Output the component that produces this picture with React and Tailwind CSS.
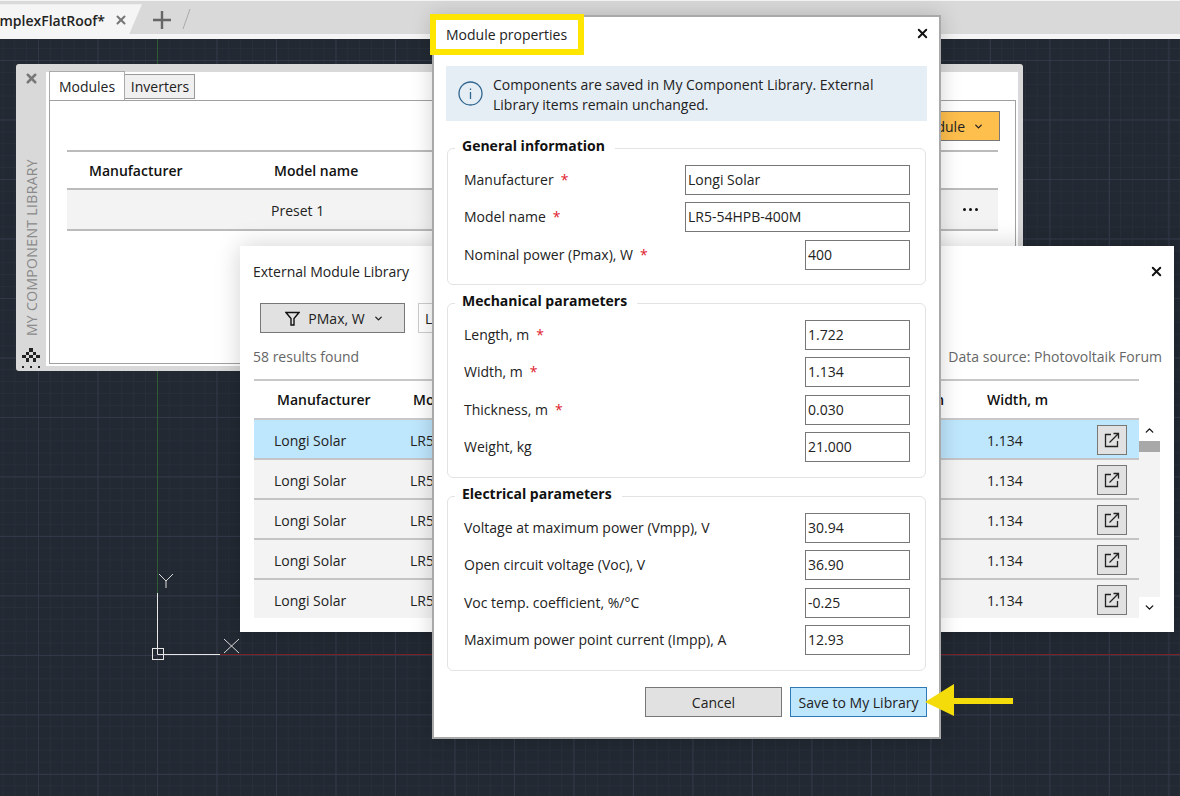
import React from "react";
import { ChevronDown, ChevronUp, X } from "lucide-react";

const generalRows = [
  { label: "Manufacturer", value: "Longi Solar", required: true, wide: true },
  { label: "Model name", value: "LR5-54HPB-400M", required: true, wide: true },
  { label: "Nominal power (Pmax), W", value: "400", required: true },
];
const mechanicalRows = [
  { label: "Length, m", value: "1.722", required: true },
  { label: "Width, m", value: "1.134", required: true },
  { label: "Thickness, m", value: "0.030", required: true },
  { label: "Weight, kg", value: "21.000" },
];
const electricalRows = [
  { label: "Voltage at maximum power (Vmpp), V", value: "30.94" },
  { label: "Open circuit voltage (Voc), V", value: "36.90" },
  { label: "Voc temp. coefficient, %/°C", value: "-0.25" },
  { label: "Maximum power point current (Impp), A", value: "12.93" },
];
const libraryRows = [true, false, false, false, false];

const ExternalIcon = () => (
  <svg width="16" height="16" viewBox="0 0 16 16" fill="none" stroke="#222" strokeWidth="1.3">
    <path d="M7 2.5H1.5v12h12V9" />
    <path d="M5.5 10.5 14 2M9.5 1.5h5v5" />
  </svg>
);

const FunnelIcon = () => (
  <svg width="15" height="15" viewBox="0 0 15 15" fill="none" stroke="#111" strokeWidth="1.4">
    <path d="M1 1.5h13L9 7.5v6.5H6V7.5z" />
  </svg>
);

const DitherIcon = () => (
  <svg width="22" height="22" viewBox="0 0 22 22" fill="#222">
    {[
      [9, 1, 4, 4], [6, 5, 3, 3], [13, 5, 3, 3], [2, 8, 4, 3], [9, 8, 4, 3], [16, 8, 4, 3],
      [6, 11, 3, 4], [13, 11, 3, 4], [2, 19, 2, 2], [10, 19, 2, 2], [18, 19, 2, 2],
    ].map(([x, y, w, h], i) => (
      <rect key={i} x={x} y={y} width={w} height={h} />
    ))}
  </svg>
);

const PropertyGroup = ({ title, rows, className }) => (
  <fieldset className={`mx-px rounded-md border border-[#e3e3e3] pl-4 pr-[15px] pb-[14.5px] ${className}`}>
    <legend className="ml-[-9px] h-6 pl-[7px] pr-[10px] text-[14px] leading-5 font-bold text-[#111]">{title}</legend>
    <div className="flex flex-col gap-[7.5px] pt-[4.5px]">
      {rows.map((row) => (
        <div key={row.label} className="flex h-[30px] items-center justify-between">
          <span className="pb-px text-[14px] text-[#222]">
            {row.label}
            {row.required && <span className="ml-[7px] text-[#e0202c]">*</span>}
          </span>
          <div
            className={`flex h-[30px] items-center border border-[#777] px-[2px] pb-px text-[14px] text-[#222] ${
              row.wide ? "w-[225px]" : "w-[105px]"
            }`}
          >
            {row.value}
          </div>
        </div>
      ))}
    </div>
  </fieldset>
);

const ComponentLibrary = () => (
  <div className="absolute left-4 top-16 flex h-[307px] w-[1007px] rounded-[3px] bg-[#d9d9d9]">
    <div className="flex w-[30px] flex-col items-center pt-[7px] pb-[2px]">
      <X size={15} strokeWidth={4} className="text-[#777]" />
      <div className="flex flex-1 items-end justify-center pb-[11px]">
        <span className="rotate-180 text-[14px] tracking-[0.35px] whitespace-nowrap text-[#8a8a8a] [writing-mode:vertical-rl]">
          MY COMPONENT LIBRARY
        </span>
      </div>
      <DitherIcon />
    </div>
    <div className="mt-2 mr-[5px] mb-[5px] flex flex-1 flex-col bg-white pl-[3px] pr-[2px] pb-[2px]">
      <div className="relative z-10 flex h-7 items-end">
        <div className="flex h-[29px] w-[76px] items-center justify-center border border-b-0 border-[#aaa] bg-white text-[14px] text-[#222]">
          Modules
        </div>
        <div className="mb-px flex h-[25px] w-[70px] items-center justify-center border border-l-0 border-[#999] bg-[#f0f0f0] pl-px text-[14px] text-[#222]">
          Inverters
        </div>
      </div>
      <div className="flex flex-1 flex-col border border-[#a0a0a0] pt-[10px] pl-[17px] pr-[15px]">
        <div className="flex justify-end">
          <div className="flex h-[30px] w-[170px] items-center justify-end gap-2 border border-[#777] bg-[#ffbf4d] pr-[15px] text-[14px] text-[#222]">
            Add module
            <ChevronDown size={11} strokeWidth={3} />
          </div>
        </div>
        <div className="mt-[9px] mr-[2px] border-t-2 border-[#bbb]">
          <div className="flex h-[36px] items-center text-[14px] font-semibold text-[#111]">
            <span className="w-[207px] pl-[22px]">Manufacturer</span>
            <span>Model name</span>
          </div>
          <div className="flex h-[43px] items-center border-t-2 border-b-2 border-[#bbb] bg-[#f3f3f3] text-[14px] text-[#222]">
            <span className="ml-[204px] pt-px">Preset 1</span>
            <span className="ml-auto flex gap-[3px] pr-5">
              <i className="size-[3px] rounded-full bg-[#111]" />
              <i className="size-[3px] rounded-full bg-[#111]" />
              <i className="size-[3px] rounded-full bg-[#111]" />
            </span>
          </div>
        </div>
      </div>
    </div>
  </div>
);

const ExternalLibrary = () => (
  <div className="absolute left-60 top-[246px] flex h-[386px] w-[934px] flex-col bg-white shadow-[0_0_24px_rgba(0,0,0,0.18)]">
    <div className="relative pt-4 pl-[13px] text-[14px] leading-5 text-[#222]">
      External Module Library
      <X size={15} strokeWidth={3} className="absolute right-[10px] top-[18px] text-[#111]" />
    </div>
    <div className="mt-[21px] flex gap-[13px] pl-5">
      <div className="flex h-[30px] w-[145px] items-center justify-center gap-2 border border-[#777] bg-[#e1e1e1] pl-1 text-[14px] text-[#222]">
        <FunnelIcon />
        PMax, W
        <ChevronDown size={11} strokeWidth={3} />
      </div>
      <div className="flex h-[30px] w-[200px] items-center border border-[#ccc] px-[6px] text-[14px] text-[#222]">
        Longi Solar
      </div>
    </div>
    <div className="mt-[14px] flex justify-between pl-[13px] pr-3 text-[14px] leading-5 text-[#666]">
      <span>58 results found</span>
      <span>Data source: Photovoltaik Forum</span>
    </div>
    <div className="mt-3 flex pl-[14px]">
      <div className="w-[885px]">
        <div className="flex h-[41px] items-center border-y-2 border-[#c8c8c8] pr-[42px] text-[14px] font-semibold text-[#111]">
          <span className="w-[159px] pl-[23px]">Manufacturer</span>
          <span className="flex flex-1 justify-between pr-[43px]">
            <span>Model name</span>
            <span>Length, m</span>
          </span>
          <span className="w-[110px]">Width, m</span>
        </div>
        {libraryRows.map((selected, i) => (
          <div
            key={i}
            className={`flex items-center pt-px pl-5 pr-3 text-[14px] text-[#222] ${
              selected ? "bg-[#bee6fd]" : "bg-[#f3f3f3]"
            } ${i < 4 ? "h-10 border-b-2 border-[#c4c4c4]" : "h-[38px]"}`}
          >
            <span className="w-[136px] pt-[2px]">Longi Solar</span>
            <span className="flex-1 pt-[2px]">LR5-54HPB-400M</span>
            <span className="w-[110px] pt-[2px]">1.134</span>
            <div className="flex size-[30px] items-center justify-center border border-[#777] bg-[#e1e1e1]">
              <ExternalIcon />
            </div>
          </div>
        ))}
      </div>
      <div className="mt-[41px] flex h-[198px] w-[21px] flex-col items-center">
        <div className="flex h-[21px] items-center text-[#111]">
          <ChevronUp size={13} strokeWidth={2.5} />
        </div>
        <div className="h-[11px] w-full bg-[#a8a8a8]" />
        <div className="w-full flex-1 bg-[#f3f3f3]" />
        <div className="flex h-[21px] items-center text-[#111]">
          <ChevronDown size={13} strokeWidth={2.5} />
        </div>
      </div>
    </div>
  </div>
);

const ModuleProperties = () => (
  <div className="absolute left-[432px] top-[15px] flex h-[724px] w-[509px] flex-col border-2 border-[#a9a9a9] bg-white px-3 shadow-[0_0_20px_rgba(0,0,0,0.18)]">
    <div className="flex h-[49px] items-start justify-between pt-[8px] text-[14px] leading-5 text-[#222]">
      <span>Module properties</span>
      <X size={15} strokeWidth={3} className="mt-[1px] -mr-[3px] text-[#111]" />
    </div>
    <div className="flex h-[55px] items-center gap-[10px] bg-[#e6eef5] pl-[12px] text-[14px] leading-5 text-[#222]">
      <svg width="25" height="25" viewBox="0 0 25 25" fill="none" stroke="#2f6690" strokeWidth="1.3" className="shrink-0">
        <circle cx="12.5" cy="12.5" r="11.5" />
        <path d="M12.5 11v7M12.5 7.5v1.6" />
      </svg>
      <span className="pt-[2px]">
        Components are saved in My Component Library. External
        <br />
        Library items remain unchanged.
      </span>
    </div>
    <PropertyGroup title="General information" rows={generalRows} className="mt-[15px]" />
    <PropertyGroup title="Mechanical parameters" rows={mechanicalRows} className="mt-[6px]" />
    <PropertyGroup title="Electrical parameters" rows={electricalRows} className="mt-[6.5px]" />
    <div className="mt-[16.5px] flex justify-end gap-2 text-[14px] text-[#222]">
      <div className="flex h-[30px] w-[137px] items-center justify-center border border-[#777] bg-[#e1e1e1]">Cancel</div>
      <div className="flex h-[30px] w-[137px] items-center justify-center border border-[#2f7ab5] bg-[#bee6fd]">
        Save to My Library
      </div>
    </div>
  </div>
);

const App = () => {
  return (
    <div className="relative h-[796px] w-[1180px] overflow-hidden bg-[#222932] font-['Open_Sans','Noto_Sans',sans-serif]">
      {/* model space grid */}
      <div className="absolute inset-0 bg-[linear-gradient(#323848_1px,transparent_1px),linear-gradient(90deg,#323848_1px,transparent_1px),linear-gradient(#282e3a_1px,transparent_1px),linear-gradient(90deg,#282e3a_1px,transparent_1px)] [background-position:38px_60px,38px_60px,38px_60px,38px_60px] [background-size:59.5px_59.5px,59.5px_59.5px,11.9px_11.9px,11.9px_11.9px]" />

      <svg width="1180" height="796" className="absolute inset-0" fill="none">
        <path d="M157.5 39V593" stroke="#2f5a33" />
        <path d="M220 654.5H1180" stroke="#7a2326" />
        <path d="M157.5 593V654.5H220" stroke="#e6e6e6" />
        <rect x="152.5" y="648.5" width="11" height="11" stroke="#e6e6e6" />
        <path d="M159 574l7 7 7-7M166 581v7" stroke="#dcdcdc" />
        <path d="M224 639l15 14M239 639l-15 14" stroke="#dcdcdc" />
      </svg>

      {/* drawing tabs */}
      <div className="relative flex h-[39px] flex-col bg-[#f5f5f5]">
        <div className="relative mt-px h-[33px] bg-[#d9d9d9]">
          <div className="flex h-full w-[142px] items-center justify-end bg-[#f5f5f5] pr-[14px] pt-[5px] [clip-path:polygon(0_10%,100%_10%,91%_100%,0_100%)]">
            <span className="text-[14px] font-semibold whitespace-nowrap text-[#222]">ComplexFlatRoof*</span>
            <X size={14} strokeWidth={3.5} className="ml-[9px] shrink-0 text-[#777]" />
          </div>
          <div className="absolute left-[153px] top-[10px] h-[18px] w-[18px] text-[#666]">
            <svg width="18" height="18" viewBox="0 0 18 18" fill="none" stroke="currentColor" strokeWidth="2.4">
              <path d="M9 0v18M0 9h18" />
            </svg>
          </div>
          <svg width="10" height="20" className="absolute left-[182px] top-[8px]" fill="none" stroke="#aaa">
            <path d="M8 0 1 20" />
          </svg>
        </div>
      </div>

      <ComponentLibrary />
      <ExternalLibrary />
      <ModuleProperties />

      {/* callouts */}
      <div className="absolute left-[430px] top-[14px] h-[41px] w-[154px] border-[6px] border-[#ffe600]" />
      <svg width="92" height="32" viewBox="0 0 92 32" className="absolute left-[925px] top-[684px]">
        <path d="M0 18 29 0v14h59v6H29v12z" fill="#f4dc0a" />
      </svg>
    </div>
  );
};

export default App;
